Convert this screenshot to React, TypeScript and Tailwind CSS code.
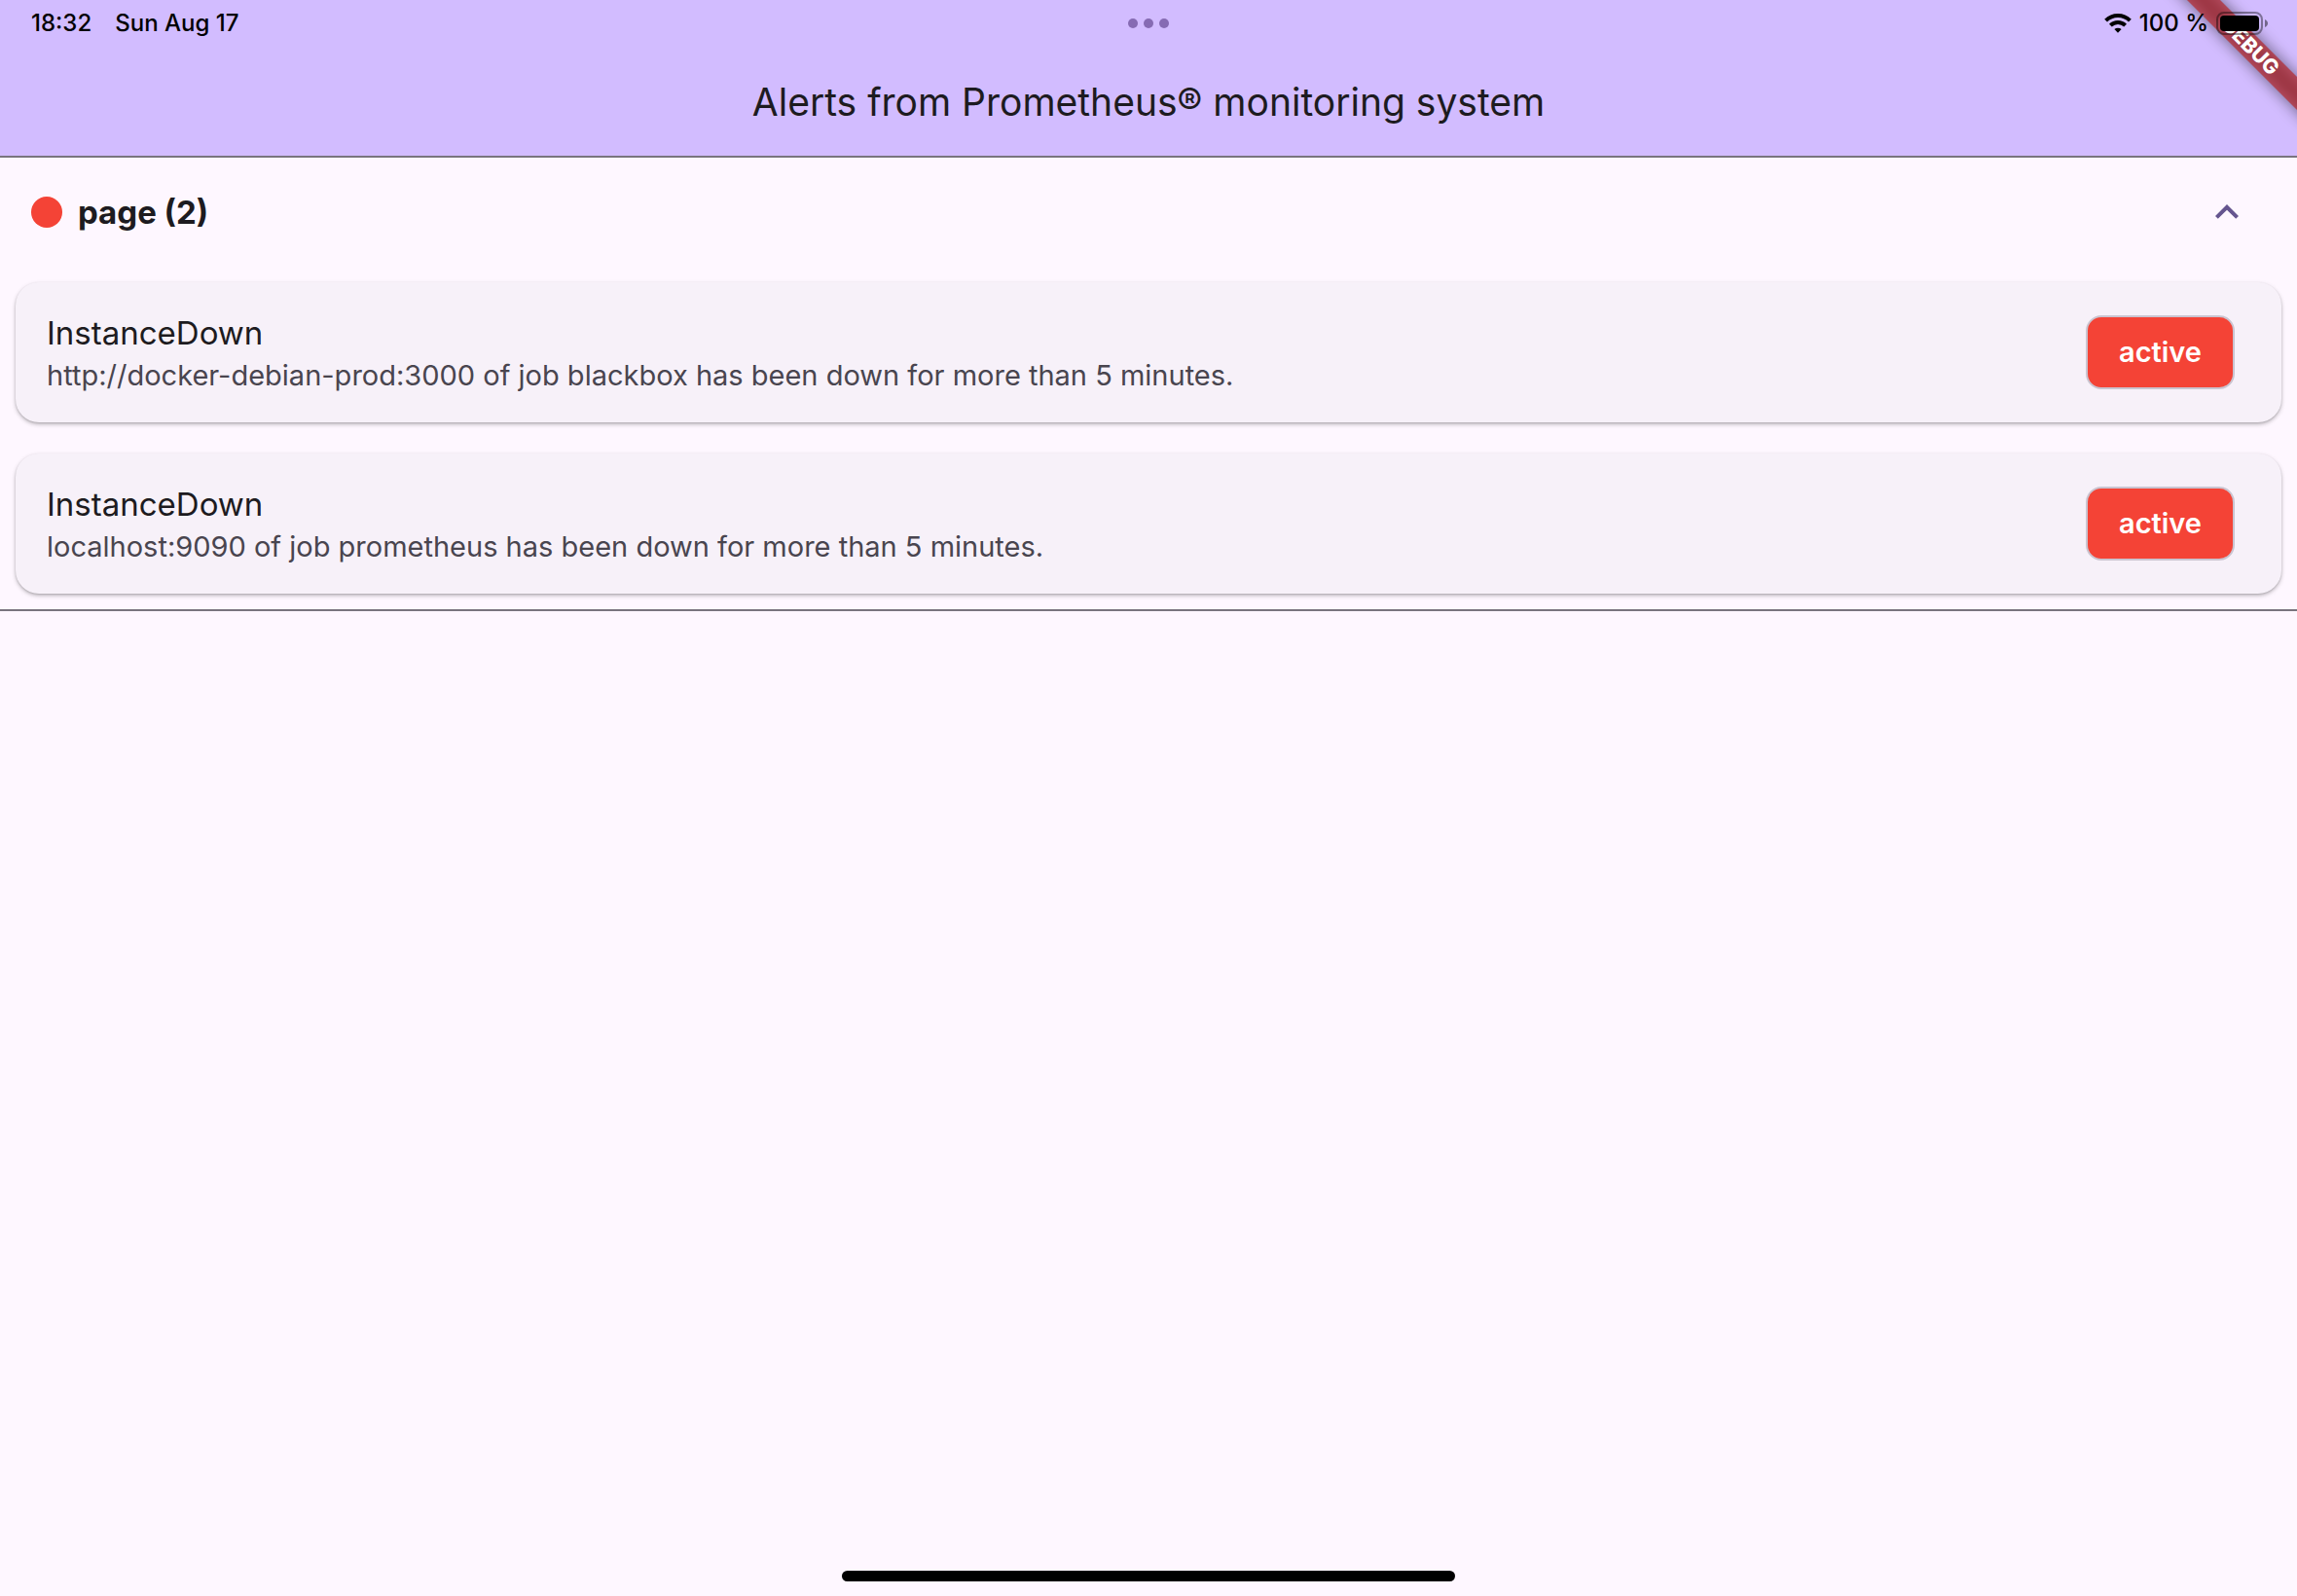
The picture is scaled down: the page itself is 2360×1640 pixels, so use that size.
import { useState } from "react";

type Alert = { name: string; summary: string; state: string };

const alerts: Alert[] = [
  {
    name: "InstanceDown",
    summary: "http://docker-debian-prod:3000 of job blackbox has been down for more than 5 minutes.",
    state: "active",
  },
  {
    name: "InstanceDown",
    summary: "localhost:9090 of job prometheus has been down for more than 5 minutes.",
    state: "active",
  },
];

function WifiIcon() {
  return (
    <svg className="h-5 w-7" viewBox="0 0 28 20" fill="none" stroke="#000" strokeWidth="4" aria-hidden="true">
      <path d="M1.6 7.2a17.6 17.6 0 0 1 24.8 0" />
      <path d="M6.4 12.1a10.8 10.8 0 0 1 15.2 0" />
      <path d="M14 19.8l-3.6-3.7a5.2 5.2 0 0 1 7.2 0z" fill="#000" stroke="none" />
    </svg>
  );
}

function BatteryIcon() {
  return (
    <svg className="h-6 w-[51px] overflow-visible" viewBox="0 0 51 24" fill="none" aria-hidden="true">
      <rect x="1" y="1" width="46" height="22" rx="7" stroke="#000" strokeOpacity="0.4" strokeWidth="2" />
      <rect x="4" y="4" width="40" height="16" rx="4" fill="#000" />
      <path d="M50 8c4 1.400 4 6.600 0 8z" fill="#000" fillOpacity="0.45" />
    </svg>
  );
}

function StatusBar() {
  return (
    <div className="relative z-10 flex h-12 items-center justify-between px-8 text-2xl leading-6 font-medium text-black">
      <div className="flex flex-1 gap-6">
        <span>18:32</span>
        <span>Sun Aug 17</span>
      </div>
      <div className="flex justify-center gap-1.5">
        <span className="size-2.5 rounded-full bg-[#866bb3]" />
        <span className="size-2.5 rounded-full bg-[#866bb3]" />
        <span className="size-2.5 rounded-full bg-[#866bb3]" />
      </div>
      <div className="flex flex-1 items-center justify-end gap-2">
        <WifiIcon />
        <span>100 %</span>
        <BatteryIcon />
      </div>
    </div>
  );
}

function DebugBanner() {
  return (
    <div className="pointer-events-none absolute top-0 right-0 size-40 overflow-hidden">
      <div className="absolute -top-9 -right-[72px] flex h-[168px] w-60 rotate-45 items-center">
        <div className="relative h-6 w-full">
          <div className="absolute inset-0 bg-black/50 blur-[8px]" />
          <div className="relative flex h-6 items-center justify-center bg-[#b71c1c]/63 text-[21px] leading-6 font-extrabold text-white">
            DEBUG
          </div>
        </div>
      </div>
    </div>
  );
}

function AlertCard({ alert }: { alert: Alert }) {
  return (
    <li className="flex min-h-36 items-center justify-between rounded-3xl bg-[#f7f1f9] pr-12 pl-8 shadow-[0_2px_4px_rgba(0,0,0,0.26),0_1px_2px_rgba(0,0,0,0.12)]">
      <div>
        <h2 className="text-[33px] leading-12 text-[#1d1b20]">{alert.name}</h2>
        <p className="text-[29px] leading-10 text-[#49454f]">{alert.summary}</p>
      </div>
      <button
        type="button"
        className="h-[76px] rounded-2xl border-2 border-[#cac4d0] bg-[#f44336] px-8 text-[29px] leading-10 font-semibold text-white"
      >
        {alert.state}
      </button>
    </li>
  );
}

export default function App() {
  const [open, setOpen] = useState(true);
  return (
    <div className="relative flex min-h-screen flex-col bg-[#fef7ff] font-[Inter,sans-serif]">
      <header className="border-b-2 border-[#79747e] bg-[#d2bcff]">
        <StatusBar />
        <h1 className="flex h-28 items-center justify-center pt-0.5 text-[39px] text-[#1d1b20]">
          Alerts from Prometheus® monitoring system
        </h1>
      </header>
      <DebugBanner />
      <main className="grow">
        <section className="border-b-2 border-[#79747e]">
          <button
            type="button"
            aria-expanded={open}
            onClick={() => setOpen(!open)}
            className="flex h-28 w-full items-center gap-4 pr-12 pl-8"
          >
            <span className="size-8 rounded-full bg-[#f44336]" />
            <span className="text-[33px] leading-12 font-bold text-[#1d1b20]">page (2)</span>
            <svg className="ml-auto size-12" viewBox="0 0 24 24" fill="#65558f" aria-hidden="true">
              <path d="M12 8l-6 6 1.410 1.410L12 10.830l4.590 4.580L18 14z" />
            </svg>
          </button>
          {open && (
            <ul className="flex flex-col gap-8 p-4">
              {alerts.map((alert) => (
                <AlertCard key={alert.summary} alert={alert} />
              ))}
            </ul>
          )}
        </section>
      </main>
      <div className="mb-[15px] h-[11px] w-[630px] self-center rounded-full bg-black" />
    </div>
  );
}
